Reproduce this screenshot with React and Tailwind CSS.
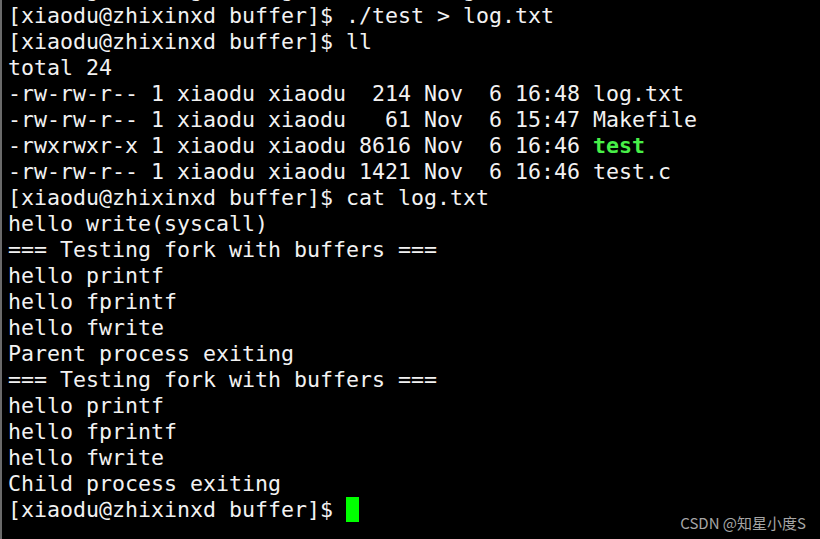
import React from "react";

const PROMPT = "[xiaodu@zhixinxd buffer]$ ";

const lines = [
  PROMPT + "./test > log.txt",
  PROMPT + "ll",
  "total 24",
  "-rw-rw-r-- 1 xiaodu xiaodu  214 Nov  6 16:48 log.txt",
  "-rw-rw-r-- 1 xiaodu xiaodu   61 Nov  6 15:47 Makefile",
  null,
  "-rw-rw-r-- 1 xiaodu xiaodu 1421 Nov  6 16:46 test.c",
  PROMPT + "cat log.txt",
  "hello write(syscall)",
  "=== Testing fork with buffers ===",
  "hello printf",
  "hello fprintf",
  "hello fwrite",
  "Parent process exiting",
  "=== Testing fork with buffers ===",
  "hello printf",
  "hello fprintf",
  "hello fwrite",
  "Child process exiting",
];

export default function App() {
  return (
    <div className="relative w-[820px] h-[539px] overflow-hidden bg-black border-l-2 border-[#6a6a6a]">
      <div
        className="pl-[6px] text-[21.6px] leading-[26px] text-[#f2f2f2] whitespace-pre -mt-[23px]"
        style={{ fontFamily: '"DejaVu Sans Mono", monospace' }}
      >
        <div>{"      g       g      g             g"}</div>
        {lines.map((l, i) =>
          l === null ? (
            <div key={i}>
              {"-rwxrwxr-x 1 xiaodu xiaodu 8616 Nov  6 16:46 "}
              <span className="font-bold text-[#48f048]">test</span>
            </div>
          ) : (
            <div key={i}>{l}</div>
          )
        )}
        <div>
          {PROMPT}
          <span className="inline-block w-[13px] h-[25px] bg-[#00ff00] align-top" />
        </div>
      </div>
      <div
        className="absolute right-[14px] bottom-[6px] text-[15px] leading-[20px] text-[#a6a6a6]"
        style={{ fontFamily: '"Noto Sans CJK SC", "Noto Sans", sans-serif' }}
      >
        CSDN @知星小度S
      </div>
    </div>
  );
}
